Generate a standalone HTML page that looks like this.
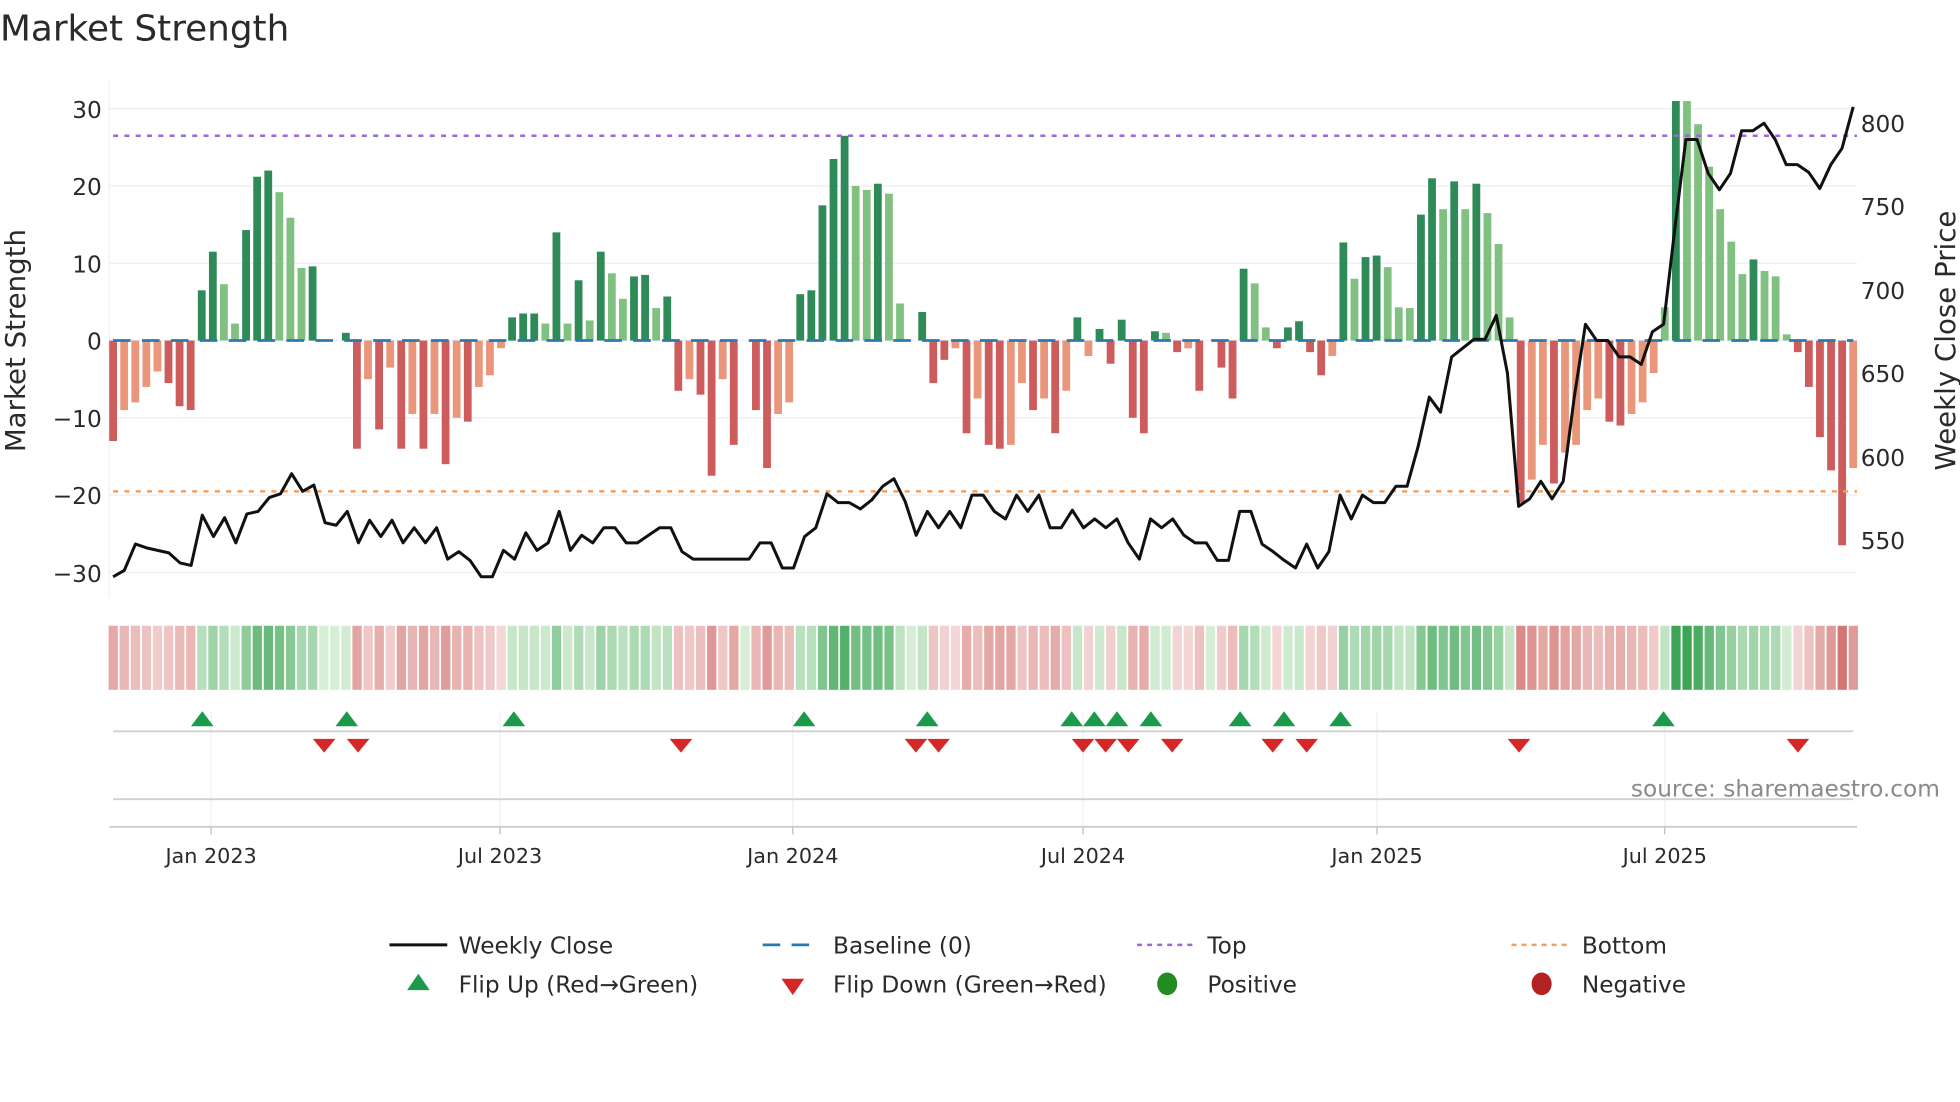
<!DOCTYPE html>
<html><head><meta charset="utf-8"><style>
html,body{margin:0;padding:0;background:#fff;width:1960px;height:1102px;overflow:hidden}
svg{display:block}
text{font-family:"DejaVu Sans","Liberation Sans",sans-serif;fill:#2a2a2a}
</style></head><body>
<svg id="s" width="1960" height="1102" viewBox="0 0 1560 877" xmlns="http://www.w3.org/2000/svg">
<text x="0" y="32" font-size="28.5" fill="#333">Market Strength</text>
<g id="grid"></g>
<line x1="87" y1="64" x2="87" y2="476" stroke="#eef0f4" stroke-width="1"/>
<g id="bars"></g>
<line x1="90" y1="108" x2="1478" y2="108" stroke="#9b6ad6" stroke-width="2" stroke-dasharray="4,5"/>
<line x1="90" y1="391" x2="1478" y2="391" stroke="#f0a060" stroke-width="2" stroke-dasharray="4,5"/>
<polyline id="price" fill="none" stroke="#111" stroke-width="2.4" stroke-linejoin="round"/>
<g font-size="18.5" text-anchor="end">
<text x="81" y="94">30</text><text x="81" y="155">20</text><text x="81" y="217">10</text><text x="81" y="278">0</text>
<text x="81" y="340">−10</text><text x="81" y="401">−20</text><text x="81" y="463">−30</text>
</g>
<g font-size="18.5">
<text x="1481" y="105">800</text><text x="1481" y="171">750</text><text x="1481" y="238">700</text><text x="1481" y="304">650</text>
<text x="1481" y="371">600</text><text x="1481" y="437">550</text>
</g>
<text transform="translate(20,271) rotate(-90)" font-size="22" text-anchor="middle">Market Strength</text>
<text transform="translate(1556,271) rotate(-90)" font-size="22" text-anchor="middle">Weekly Close Price</text>
<g id="heat"></g>
<g id="vg" stroke="#eef0f4" stroke-width="1"></g>
<line x1="90" y1="582" x2="1475" y2="582" stroke="#d0d0d0" stroke-width="1.5"/>
<line x1="90" y1="636" x2="1475" y2="636" stroke="#d0d0d0" stroke-width="1.5"/>
<line x1="87" y1="658" x2="1478" y2="658" stroke="#ccc" stroke-width="1.5"/>
<g id="marks"></g>
<text x="1544" y="634" font-size="18.5" text-anchor="end" style="fill:#8a8a8a">source: sharemaestro.com</text>
<g font-size="16.5" text-anchor="middle">
<text x="168" y="687">Jan 2023</text><text x="398" y="687">Jul 2023</text><text x="631" y="687">Jan 2024</text>
<text x="862" y="687">Jul 2024</text><text x="1096" y="687">Jan 2025</text><text x="1325" y="687">Jul 2025</text>
</g>
<g font-size="18.5">
<line x1="310" y1="752" x2="356" y2="752" stroke="#111" stroke-width="2.4"/>
<text x="365" y="759">Weekly Close</text>
<line x1="607" y1="752" x2="651" y2="752" stroke="#2a7ab0" stroke-width="2.2" stroke-dasharray="14,9"/>
<text x="663" y="759">Baseline (0)</text>
<line x1="905" y1="752" x2="949" y2="752" stroke="#9b6ad6" stroke-width="2" stroke-dasharray="4,4"/>
<text x="961" y="759">Top</text>
<line x1="1203" y1="752" x2="1247" y2="752" stroke="#f0a060" stroke-width="2" stroke-dasharray="4,4"/>
<text x="1259" y="759">Bottom</text>
<polygon points="324,788 342,788 333,775" fill="#1a9a4a"/>
<text x="365" y="790">Flip Up (Red→Green)</text>
<polygon points="622,779 640,779 631,792" fill="#d62728"/>
<text x="663" y="790">Flip Down (Green→Red)</text>
<ellipse cx="929" cy="783" rx="8" ry="9" fill="#228b22"/>
<text x="961" y="790">Positive</text>
<ellipse cx="1227" cy="783" rx="8" ry="9" fill="#b22222"/>
<text x="1259" y="790">Negative</text>
</g>
</svg>
<script>
var NS="http://www.w3.org/2000/svg";
function el(p,t,a){var e=document.createElementNS(NS,t);for(var k in a)e.setAttribute(k,a[k]);document.getElementById(p).appendChild(e);return e;}
for(var v=-30;v<=30;v+=10){var y=271-v*6.15;el("grid","line",{x1:87,x2:1478,y1:y,y2:y,stroke:"#eef0f5","stroke-width":1.2});}
var D=[[-13,1],[-9,0],[-8,0],[-6,0],[-4,0],[-5.5,1],[-8.5,1],[-9,1],[6.5,1],[11.5,1],[7.3,0],[2.2,0],[14.3,1],[21.2,1],[22,1],[19.2,0],[15.9,0],[9.4,0],[9.6,1],[0,0],[0,0],[1,1],[-14,1],[-5,0],[-11.5,1],[-3.5,0],[-14,1],[-9.5,0],[-14,1],[-9.5,0],[-16,1],[-10,0],[-10.5,1],[-6,0],[-4.5,0],[-1,0],[3,1],[3.5,1],[3.5,1],[2.2,0],[14,1],[2.2,0],[7.8,1],[2.6,0],[11.5,1],[8.7,0],[5.4,0],[8.3,1],[8.5,1],[4.2,0],[5.7,1],[-6.5,1],[-5,0],[-7,1],[-17.5,1],[-5,0],[-13.5,1],[0,0],[-9,1],[-16.5,1],[-9.5,0],[-8,0],[6,1],[6.5,1],[17.5,1],[23.5,1],[26.5,1],[20,0],[19.5,0],[20.3,1],[19,0],[4.8,0],[0,0],[3.7,1],[-5.5,1],[-2.5,1],[-1,0],[-12,1],[-7.5,0],[-13.5,1],[-14,1],[-13.5,0],[-5.5,0],[-9,1],[-7.5,0],[-12,1],[-6.5,0],[3,1],[-2,0],[1.5,1],[-3,1],[2.7,1],[-10,1],[-12,1],[1.2,1],[1,0],[-1.5,1],[-1,0],[-6.5,1],[0,0],[-3.5,1],[-7.5,1],[9.3,1],[7.4,0],[1.7,0],[-1,1],[1.7,1],[2.5,1],[-1.5,1],[-4.5,1],[-2,0],[12.7,1],[8,0],[10.8,1],[11,1],[9.5,0],[4.3,0],[4.2,0],[16.3,1],[21,1],[17,0],[20.6,1],[17,0],[20.3,1],[16.5,0],[12.5,0],[3,0],[-21,1],[-18,0],[-13.5,0],[-18.5,1],[-14.5,0],[-13.5,0],[-9,0],[-7.5,0],[-10.5,1],[-11,1],[-9.5,0],[-8,0],[-4.2,0],[4.3,0],[31,1],[31,0],[28,0],[22.5,0],[17,0],[12.8,0],[8.6,0],[10.5,1],[9,0],[8.3,0],[0.8,0],[-1.5,1],[-6,1],[-12.5,1],[-16.8,1],[-26.5,1],[-16.5,0]];
var n=D.length,st=(1475-90)/(n-1);
D.forEach(function(d,i){var x=90+i*st,v=d[0],h=Math.abs(v)*6.15;
 var c=v>=0?(d[1]?"#2e8b57":"#80c080"):(d[1]?"#cd5c5c":"#e9967a");
 if(h>0.3)el("bars","rect",{x:x-3.1,width:6.2,y:v>=0?271-h:271,height:h,fill:c});
 var a=Math.min(1,Math.abs(v)/31);var col;
 if(v>=0){var r=Math.round(214-(214-60)*a),g=Math.round(238-(238-165)*a),b=Math.round(214-(214-85)*a);col="rgb("+r+","+g+","+b+")";}
 else{var r=Math.round(244-(244-205)*a),g=Math.round(218-(218-100)*a),b=Math.round(218-(218-95)*a);col="rgb("+r+","+g+","+b+")";}
 el("heat","rect",{x:x-3.6,width:7.4,y:498,height:51,fill:col});
});
el("bars","line",{x1:90,x2:1475,y1:271,y2:271,stroke:"#2a7ab0","stroke-width":2.2,"stroke-dasharray":"14,9"});
var P=[459,454,433,436,438,440,448,450,410,427,412,432,409,407,396,393,377,391,386,416,418,407,432,414,427,414,432,420,432,420,445,439,446,459,459,438,445,424,438,432,407,438,426,432,420,420,432,432,426,420,420,439,445,445,445,445,445,445,432,432,452,452,427,420,393,400,400,405,398,387,381,399,426,407,420,407,420,394,394,407,413,394,407,394,420,420,406,420,413,420,413,432,445,413,420,413,426,432,432,446,446,407,407,433,439,446,452,433,452,439,394,413,394,400,400,387,387,355,316,328,284,277,270,270,251,297,403,397,383,397,383,316,258,271,271,284,284,290,264,258,183,111,111,138,151,138,104,104,98,111,131,131,137,150,131,118,85];
var m=P.length,sp=(1475-90)/(m-1),pts=P.map(function(y,i){return (90+i*sp).toFixed(1)+","+y}).join(" ");
document.getElementById("price").setAttribute("points",pts);
[168,398,631,862,1096,1325].forEach(function(x){el("vg","line",{x1:x,x2:x,y1:566,y2:658});el("vg","line",{x1:x,x2:x,y1:658,y2:664,stroke:"#bbb"});});
[161,276,409,640,738,853,871,889,916,987,1022,1067,1324].forEach(function(x){el("marks","polygon",{points:(x-9)+",578 "+(x+9)+",578 "+x+",566",fill:"#1a9a4a"});});
[258,285,542,729,747,862,880,898,933,1013,1040,1209,1431].forEach(function(x){el("marks","polygon",{points:(x-9)+",588 "+(x+9)+",588 "+x+",599",fill:"#d62728"});});
</script>
</body></html>
